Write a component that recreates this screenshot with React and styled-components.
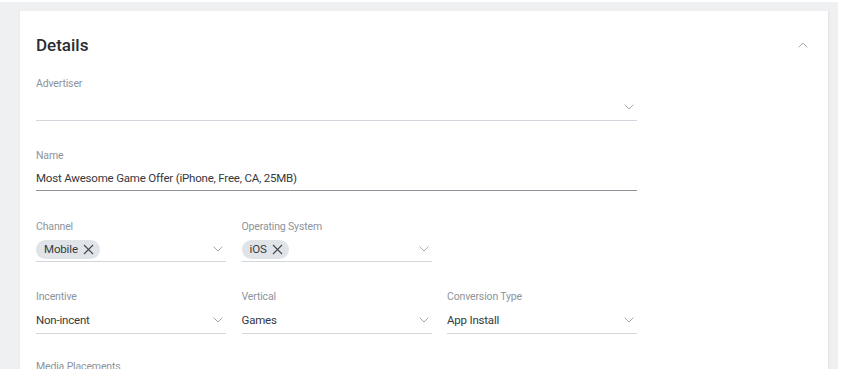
import React from 'react';
import styled, { createGlobalStyle } from 'styled-components';

const Global = createGlobalStyle`
  html, body { margin: 0; padding: 0; background: #fff; }
  body { font-family: Roboto, "Noto Sans", "Liberation Sans", sans-serif; }
`;

const Frame = styled.div`
  width: 838px;
  height: 367px;
  margin-top: 2px;
  background: #eef0f2;
  overflow: hidden;
  padding: 9px 9px 0 20px;
  box-sizing: border-box;
`;

const Card = styled.section`
  background: #fff;
  border-right: 1px solid #e2e4e7;
  box-shadow: 0 1px 2px rgba(0, 0, 0, 0.06);
  padding: 22px 16px 0 16px;
  min-height: 400px;
  box-sizing: border-box;
`;

const Header = styled.div`
  display: flex;
  align-items: center;
  justify-content: space-between;
  height: 24px;
  margin-bottom: 20px;
`;

const Title = styled.h2`
  margin: 0;
  font-size: 17px;
  font-weight: 500;
  color: #2a2d33;
  line-height: 24px;
`;

const Collapse = styled.button`
  border: 0;
  background: none;
  padding: 0;
  margin-right: 4px;
  display: flex;
  cursor: pointer;
`;

const Form = styled.div`
  width: 601px;
  display: flex;
  flex-direction: column;
  gap: 28px;
`;

const Row = styled.div`
  display: grid;
  grid-template-columns: ${p => (p.$cols ? `repeat(${p.$cols}, 190px)` : '1fr')};
  column-gap: 15.5px;
  margin-top: ${p => p.$shift || 0}px;
`;

const Field = styled.div`
  display: flex;
  flex-direction: column;
`;

const Label = styled.label`
  font-size: 10.5px;
  letter-spacing: -0.15px;
  line-height: 14px;
  color: #8d939c;
`;

const Control = styled.div`
  display: flex;
  align-items: center;
  gap: 6px;
  height: ${p => p.$h || 30}px;
  padding: 3px 3px 0 0;
  box-sizing: border-box;
  border-bottom: 1px solid ${p => (p.$dark ? '#8e939a' : '#d3d6dc')};
`;

const Value = styled.span`
  flex: 1;
  font-size: 11.5px;
  letter-spacing: -0.2px;
  color: #35383d;
  white-space: nowrap;
`;

const Chips = styled.div`
  flex: 1;
  display: flex;
  gap: 4px;
`;

const Chip = styled.span`
  display: inline-flex;
  align-items: center;
  gap: 5px;
  height: 19px;
  padding: 0 6px 0 8px;
  border-radius: 10px;
  background: #e0e3e8;
  font-size: 11.5px;
  letter-spacing: -0.15px;
  color: #383b40;
`;

const Chevron = ({ up }) => (
  <svg width="10" height="6" viewBox="0 0 10 6" fill="none">
    <path
      d={up ? 'M0.6 5.4 L5 1 L9.4 5.4' : 'M0.6 0.6 L5 5 L9.4 0.6'}
      stroke="#a2a8b1"
      strokeWidth="1"
    />
  </svg>
);

const Cross = () => (
  <svg width="11" height="11" viewBox="0 0 11 11">
    <path d="M1 1 L10 10 M10 1 L1 10" stroke="#44474c" strokeWidth="1.1" />
  </svg>
);

const Select = ({ label, value, chips, h }) => (
  <Field>
    <Label>{label}</Label>
    <Control $h={h}>
      {chips ? (
        <Chips>
          {chips.map(c => (
            <Chip key={c}>
              {c}
              <Cross />
            </Chip>
          ))}
        </Chips>
      ) : (
        <Value>{value}</Value>
      )}
      <Chevron />
    </Control>
  </Field>
);

export default function App() {
  return (
    <>
      <Global />
      <Frame>
        <Card>
          <Header>
            <Title>Details</Title>
            <Collapse aria-label="collapse">
              <Chevron up />
            </Collapse>
          </Header>
          <Form>
            <Row>
              <Select label="Advertiser" value="" h={30} />
            </Row>
            <Row>
              <Field>
                <Label>Name</Label>
                <Control $dark $h={28}>
                  <Value>Most Awesome Game Offer (iPhone, Free, CA, 25MB)</Value>
                </Control>
              </Field>
            </Row>
            <Row $cols={3} $shift={1}>
              <Select label="Channel" chips={['Mobile']} h={28} />
              <Select label="Operating System" chips={['iOS']} h={28} />
            </Row>
            <Row $cols={3}>
              <Select label="Incentive" value="Non-incent" h={30} />
              <Select label="Vertical" value="Games" h={30} />
              <Select label="Conversion Type" value="App Install" h={30} />
            </Row>
            <Row $shift={-2}>
              <Field>
                <Label>Media Placements</Label>
              </Field>
            </Row>
          </Form>
        </Card>
      </Frame>
    </>
  );
}
